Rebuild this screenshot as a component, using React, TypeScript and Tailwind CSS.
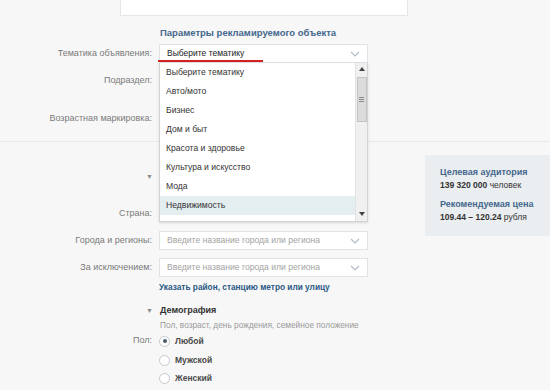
const topics = [
  'Выберите тематику',
  'Авто/мото',
  'Бизнес',
  'Дом и быт',
  'Красота и здоровье',
  'Культура и искусство',
  'Мода',
  'Недвижимость',
]

function Chevron() {
  return (
    <svg width="10" height="6" viewBox="0 0 10 6" className="shrink-0">
      <path d="M1 1l4 4 4-4" fill="none" stroke="#b4bcc4" strokeWidth="1.2" />
    </svg>
  )
}

function Row({ label, children, className = '' }: { label: string; children?: React.ReactNode; className?: string }) {
  return (
    <div className={`flex items-center h-[19px] ${className}`}>
      <div className="w-[153px] pr-[1px] text-right text-[9px] text-[#7a7a7a]">{label}</div>
      <div className="ml-[6px] w-[209px]">{children}</div>
    </div>
  )
}

function CityInput() {
  return (
    <div className="flex items-center justify-between h-[19px] bg-white border border-[#dfe2e6] px-[7px]">
      <span className="text-[8.6px] text-[#a3a3a3]">Введите название города или региона</span>
      <Chevron />
    </div>
  )
}

function Radio({ label, checked }: { label: string; checked?: boolean }) {
  return (
    <div className="flex items-center gap-[5px] h-[12px]">
      <div className="w-[11px] h-[11px] rounded-full border border-[#c3c8cd] bg-white flex items-center justify-center">
        {checked && <div className="w-[4px] h-[4px] rounded-full bg-[#4a5a6c]" />}
      </div>
      <span className="text-[8.5px] font-bold text-[#4a4a4a]">{label}</span>
    </div>
  )
}

export default function App() {
  return (
    <div className="relative w-[550px] h-[390px] overflow-hidden bg-[#f7f7f7] font-['Liberation_Sans',sans-serif]">
      <div className="ml-[120px] w-[288px] h-[16px] bg-white border border-t-0 border-[#e6e6e6]" />

      <div className="h-[126px] pt-[10px] border-b border-[#e9e9e9]">
        <div className="pl-[160px] h-[14px] text-[9.5px] font-bold text-[#45688e] leading-[14px]">
          Параметры рекламируемого объекта
        </div>
        <Row label="Тематика объявления:" className="mt-[4px]">
          <div className="relative">
            <div className="flex items-center justify-between h-[19px] bg-white border border-[#dfe2e6] px-[7px]">
              <span className="text-[8.5px] text-[#222]">Выберите тематику</span>
              <Chevron />
            </div>
            <div className="absolute left-[-1px] top-[16px] w-[105px] h-[2px] bg-[#d41f1f]" />
            <div className="absolute left-0 top-[19px] z-10 w-[209px] h-[159px] bg-white border border-t-0 border-[#cfd4d9] shadow-sm flex overflow-hidden">
              <div className="flex-1">
                {topics.map((t) => (
                  <div
                    key={t}
                    className={`h-[19px] flex items-center pl-[6px] text-[8.6px] text-[#333] ${t === 'Недвижимость' ? 'bg-[#e4edf0]' : ''}`}
                  >
                    {t}
                  </div>
                ))}
              </div>
              <div className="w-[12px] bg-[#f0f0f0] border-l border-[#e2e2e2] flex flex-col items-center">
                <div className="h-[12px] flex items-center justify-center">
                  <svg width="6" height="4" viewBox="0 0 6 4"><path d="M0 4L3 0l3 4z" fill="#444" /></svg>
                </div>
                <div className="w-[10px] h-[45px] mt-[2px] bg-[#dcdcdc] border border-[#c4c4c4] flex flex-col items-center justify-center gap-[1px]">
                  <div className="w-[5px] h-[1px] bg-[#888]" />
                  <div className="w-[5px] h-[1px] bg-[#888]" />
                  <div className="w-[5px] h-[1px] bg-[#888]" />
                </div>
                <div className="flex-1" />
                <div className="h-[12px] flex items-center justify-center mb-[1px]">
                  <svg width="6" height="4" viewBox="0 0 6 4"><path d="M0 0h6L3 4z" fill="#444" /></svg>
                </div>
              </div>
            </div>
          </div>
        </Row>
        <Row label="Подраздел:" className="mt-[8px]" />
        <Row label="Возрастная маркировка:" className="mt-[19px]" />
      </div>

      <div className="flex">
        <div className="w-[425px]">
          <div className="mt-[30px] h-[12px] flex">
            <div className="w-[153px] text-right text-[7px] text-[#8a8a8a]">▼</div>
          </div>
          <Row label="Страна:" className="mt-[20px]" />
          <Row label="Города и регионы:" className="mt-[8px]">
            <CityInput />
          </Row>
          <Row label="За исключением:" className="mt-[8px]">
            <CityInput />
          </Row>
          <div className="mt-[4px] pl-[159px] h-[12px] text-[8.3px] font-bold text-[#2a5885] leading-[12px]">
            Указать район, станцию метро или улицу
          </div>
          <div className="mt-[11px] flex items-center h-[14px]">
            <div className="w-[153px] text-right text-[7px] text-[#8a8a8a]">▼</div>
            <div className="ml-[7px] text-[9px] font-bold text-[#333]">Демография</div>
          </div>
          <div className="mt-[1px] pl-[160px] h-[12px] text-[8.3px] text-[#9a9a9a] leading-[12px]">
            Пол, возраст, день рождения, семейное положение
          </div>
          <div className="mt-[4px] flex items-center h-[12px]">
            <div className="w-[153px] pr-[1px] text-right text-[9px] text-[#7a7a7a]">Пол:</div>
            <div className="ml-[6px]">
              <Radio label="Любой" checked />
            </div>
          </div>
          <div className="mt-[7px] pl-[159px]">
            <Radio label="Мужской" />
          </div>
          <div className="mt-[6px] pl-[159px]">
            <Radio label="Женский" />
          </div>
        </div>
        <div className="mt-[13px] w-[125px] h-[81px] bg-[#ebeef0] pl-[15px] pt-[10px]">
          <div className="text-[9px] font-bold text-[#45688e] leading-[14px]">Целевая аудитория</div>
          <div className="text-[8.5px] text-[#333] leading-[12px]">
            <span className="font-bold">139 320 000</span> человек
          </div>
          <div className="mt-[6px] text-[9px] font-bold text-[#45688e] leading-[14px]">Рекомендуемая цена</div>
          <div className="text-[8.5px] text-[#333] leading-[12px]">
            <span className="font-bold">109.44 – 120.24</span> рубля
          </div>
        </div>
      </div>
    </div>
  )
}
